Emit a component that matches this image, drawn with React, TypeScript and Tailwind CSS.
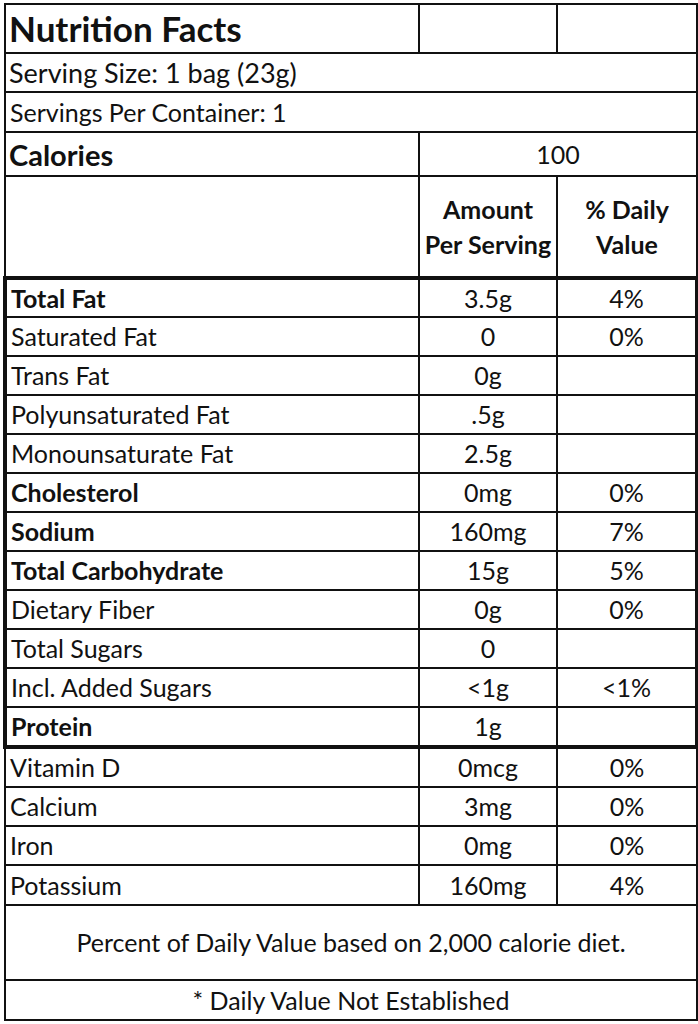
type Row = {
  label: string;
  amount: string;
  dv: string;
  bold?: boolean;
  h: string;
};

const main: Row[] = [
  { label: 'Total Fat', amount: '3.5g', dv: '4%', bold: true, h: 'h-[39px]' },
  { label: 'Saturated Fat', amount: '0', dv: '0%', h: 'h-[39px]' },
  { label: 'Trans Fat', amount: '0g', dv: '', h: 'h-[39px]' },
  { label: 'Polyunsaturated Fat', amount: '.5g', dv: '', h: 'h-[39px]' },
  { label: 'Monounsaturate Fat', amount: '2.5g', dv: '', h: 'h-[39px]' },
  { label: 'Cholesterol', amount: '0mg', dv: '0%', bold: true, h: 'h-[39px]' },
  { label: 'Sodium', amount: '160mg', dv: '7%', bold: true, h: 'h-[39px]' },
  { label: 'Total Carbohydrate', amount: '15g', dv: '5%', bold: true, h: 'h-[39px]' },
  { label: 'Dietary Fiber', amount: '0g', dv: '0%', h: 'h-[39px]' },
  { label: 'Total Sugars', amount: '0', dv: '', h: 'h-[39px]' },
  { label: 'Incl. Added Sugars', amount: '<1g', dv: '<1%', h: 'h-[39px]' },
  { label: 'Protein', amount: '1g', dv: '', bold: true, h: 'h-[40px]' },
];

const vitamins: Row[] = [
  { label: 'Vitamin D', amount: '0mcg', dv: '0%', h: 'h-[40px]' },
  { label: 'Calcium', amount: '3mg', dv: '0%', h: 'h-[39px]' },
  { label: 'Iron', amount: '0mg', dv: '0%', h: 'h-[39px]' },
  { label: 'Potassium', amount: '160mg', dv: '4%', h: 'h-[40px]' },
];

const cell = 'border-2 border-[#111] p-0';

const NutrientRow = ({ row }: { row: Row }) => (
  <tr className={row.h}>
    <td className={`${cell} pl-[4px] text-left ${row.bold ? 'font-bold' : ''}`}>
      {row.label}
    </td>
    <td className={`${cell} text-center`}>{row.amount}</td>
    <td className={`${cell} text-center`}>{row.dv}</td>
  </tr>
);

const App = () => {
  return (
    <div className="min-h-[1024px] w-[698px] bg-white pl-[3px] pt-[3px]">
      <table
        className="w-[692px] table-fixed border-collapse text-[25px] leading-none text-[#111]"
        style={{ fontFamily: 'Lato, "Open Sans", sans-serif' }}
      >
        <colgroup>
          <col className="w-[414px]" />
          <col className="w-[138px]" />
          <col className="w-[140px]" />
        </colgroup>
        <tbody>
          {/* title */}
          <tr className="h-[49px]">
            <td className={`${cell} pl-[3px] text-[35px] font-bold`}>Nutrition Facts</td>
            <td className={cell}></td>
            <td className={cell}></td>
          </tr>
          <tr className="h-[39px]">
            <td colSpan={3} className={`${cell} pl-[3px] text-[27px]`}>
              Serving Size: 1 bag (23g)
            </td>
          </tr>
          <tr className="h-[40px]">
            <td colSpan={3} className={`${cell} pl-[4px]`}>
              Servings Per Container: 1
            </td>
          </tr>
          <tr className="h-[44px]">
            <td className={`${cell} pl-[3px] text-[29px] font-bold`}>Calories</td>
            <td colSpan={2} className={`${cell} text-center`}>
              100
            </td>
          </tr>
          {/* column heads */}
          <tr className="h-[102px]">
            <td className={cell}></td>
            <td className={`${cell} text-center font-bold leading-[35px]`}>
              Amount
              <br />
              Per Serving
            </td>
            <td className={`${cell} text-center font-bold leading-[35px]`}>
              % Daily
              <br />
              Value
            </td>
          </tr>
        </tbody>
        <tbody className="border-[4px] border-[#111]">
          {main.map((row) => (
            <NutrientRow key={row.label} row={row} />
          ))}
        </tbody>
        <tbody>
          {vitamins.map((row) => (
            <NutrientRow key={row.label} row={row} />
          ))}
          <tr className="h-[75px]">
            <td colSpan={3} className={`${cell} text-center`}>
              Percent of Daily Value based on 2,000 calorie diet.
            </td>
          </tr>
          <tr className="h-[40px]">
            <td colSpan={3} className={`${cell} text-center`}>
              * Daily Value Not Established
            </td>
          </tr>
        </tbody>
      </table>
    </div>
  );
};

export default App;
